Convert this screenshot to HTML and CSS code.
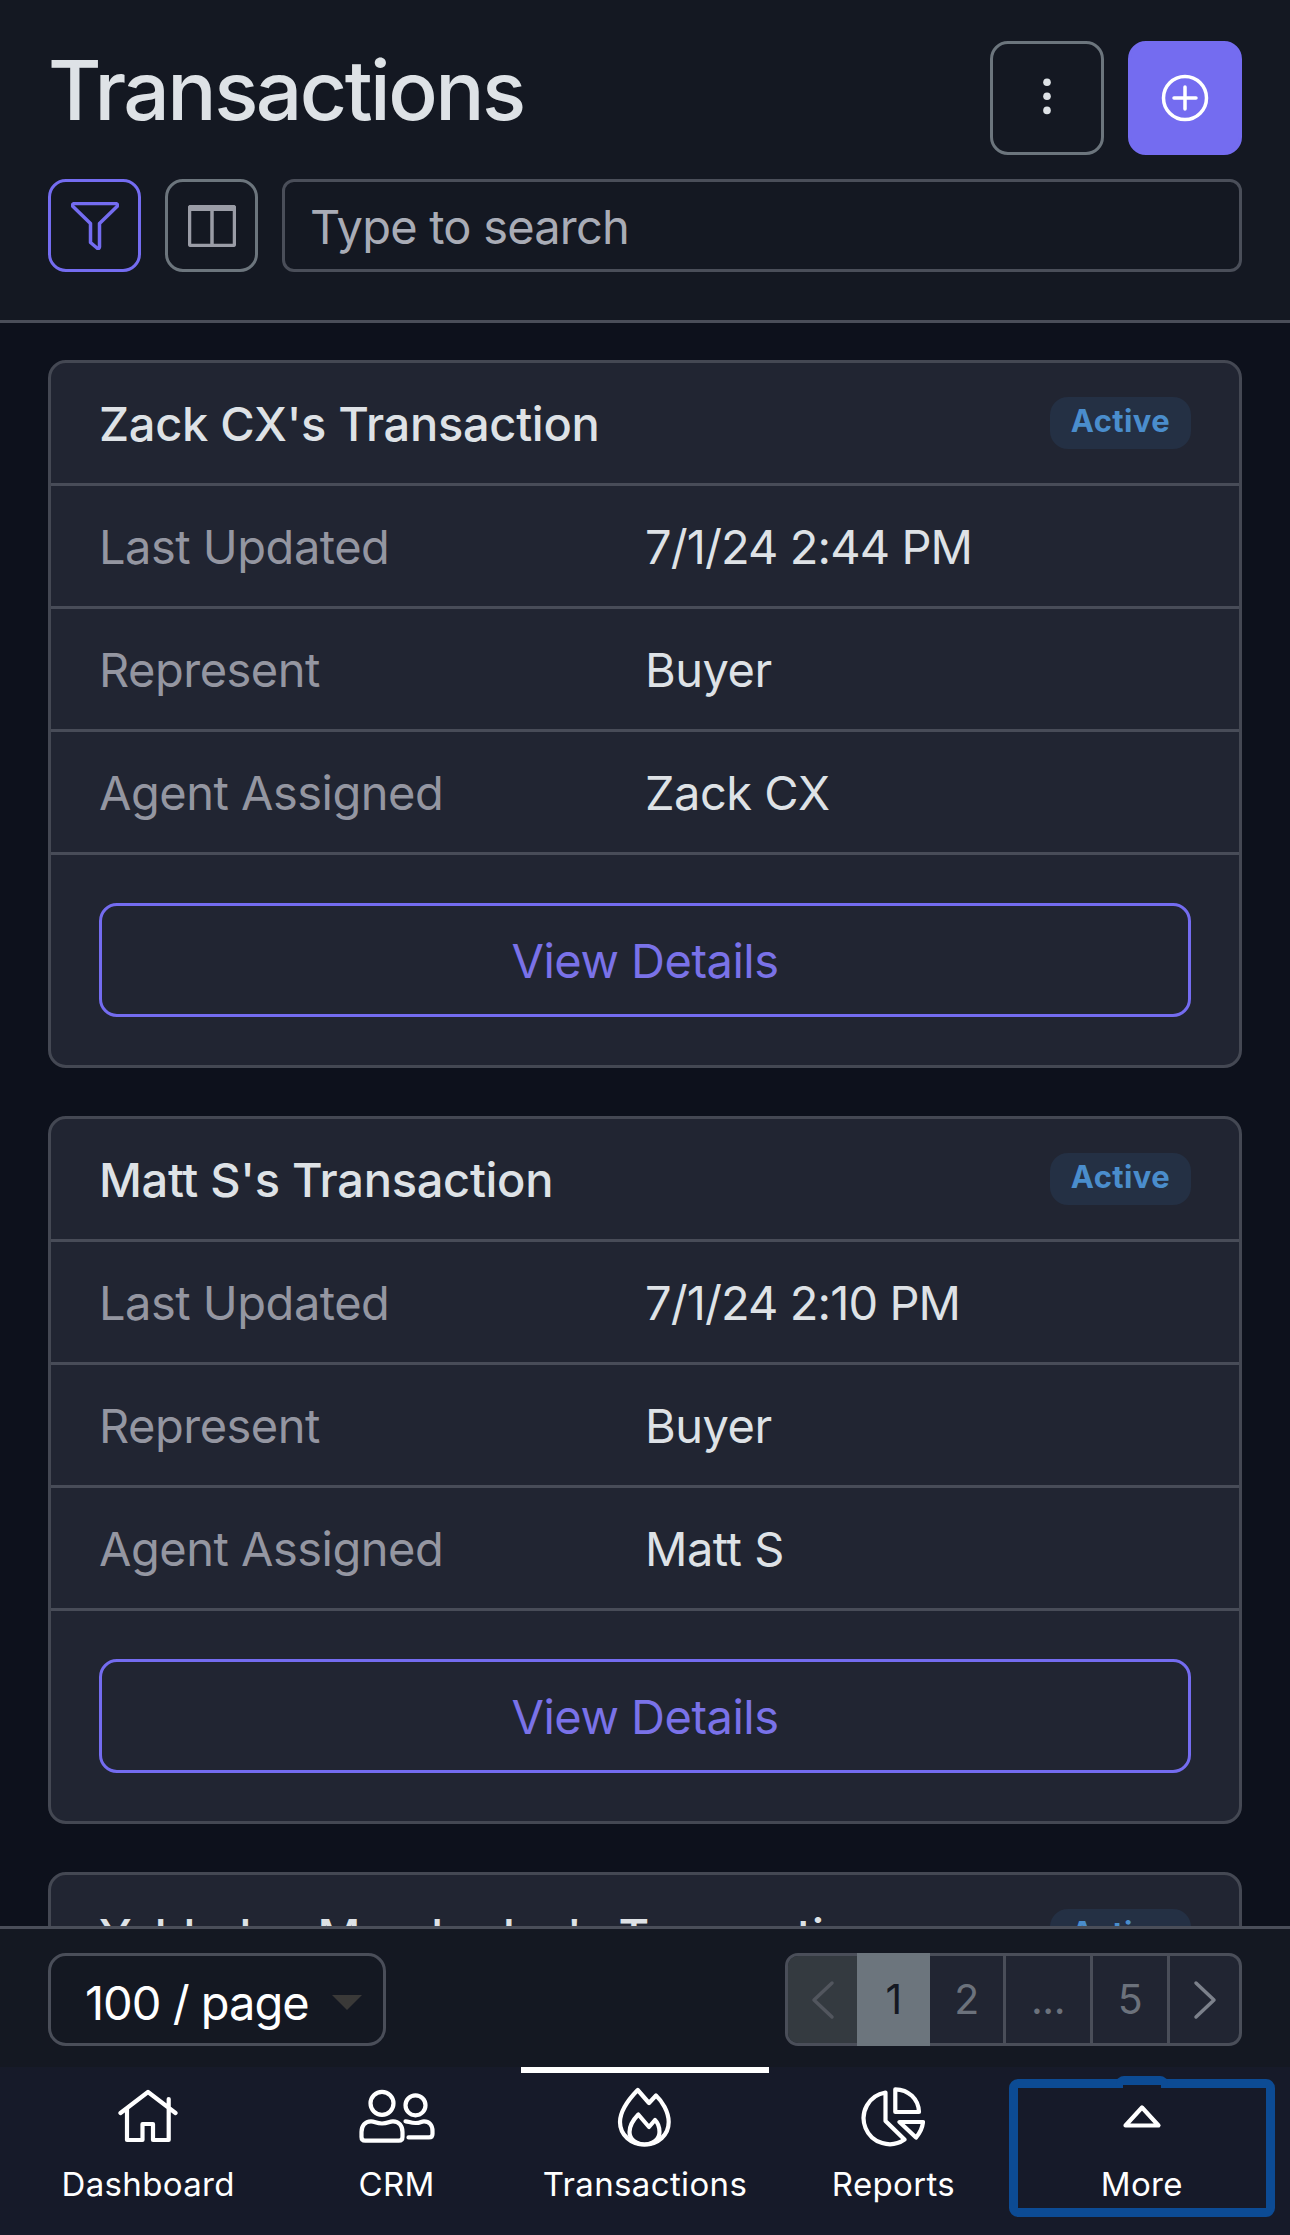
FILE: index.html
```html
<!DOCTYPE html>
<html lang="en">
<head>
    <meta charset="UTF-8">
    <meta name="viewport" content="width=device-width, initial-scale=1.0">
    <title>Transactions</title>
    <link rel="stylesheet" href="styles.css">
</head>
<body>
    <header class="page-header">
        <div class="title-row">
            <h1>Transactions</h1>
            <div class="actions">
                <button class="btn btn-menu" type="button" aria-label="Menu">
                    <svg width="48" height="48" viewBox="0 0 48 48"><circle cx="24" cy="8.3" r="3.8"/><circle cx="24" cy="22.3" r="3.8"/><circle cx="24" cy="36.4" r="3.8"/></svg>
                </button>
                <button class="btn btn-add" type="button" aria-label="Add">
                    <svg class="line" width="48" height="48" viewBox="0 0 48 48"><circle cx="24" cy="24" r="21.5"/><path d="M24 13V35M13 24H35"/></svg>
                </button>
            </div>
        </div>
        <div class="search-row">
            <button class="btn btn-small btn-filter" type="button" aria-label="Filter">
                <svg class="line" width="48" height="48" viewBox="0 0 48 48"><path d="M3.5 1.5H44.5Q47.5 2 46 4.5L28.5 21.5V45Q28 47.5 26 46L19.5 40.500V21.5L2 4.5Q.5 2 3.5 1.5Z"/></svg>
            </button>
            <button class="btn btn-small btn-columns" type="button" aria-label="Columns">
                <svg class="line" width="48" height="42" viewBox="0 0 48 42"><rect x="1.5" y="1.5" width="45" height="39" rx="2"/><path d="M3 3H45" stroke-width="6"/><path d="M24 5V40"/></svg>
            </button>
            <input class="search" type="text" placeholder="Type to search">
        </div>
    </header>

    <main class="list">
        <article class="card">
            <div class="card-head">
                <h2>Zack CX's Transaction</h2>
                <span class="badge">Active</span>
            </div>
            <div class="card-row"><span class="label">Last Updated</span><span class="date">7/1/24 2:44 PM</span></div>
            <div class="card-row"><span class="label">Represent</span><span>Buyer</span></div>
            <div class="card-row"><span class="label">Agent Assigned</span><span>Zack CX</span></div>
            <div class="card-foot"><button class="btn-details" type="button">View Details</button></div>
        </article>
        <article class="card">
            <div class="card-head">
                <h2>Matt S's Transaction</h2>
                <span class="badge">Active</span>
            </div>
            <div class="card-row"><span class="label">Last Updated</span><span class="date">7/1/24 2:10 PM</span></div>
            <div class="card-row"><span class="label">Represent</span><span>Buyer</span></div>
            <div class="card-row"><span class="label">Agent Assigned</span><span>Matt S</span></div>
            <div class="card-foot"><button class="btn-details" type="button">View Details</button></div>
        </article>
        <article class="card">
            <div class="card-head">
                <h2>Yebledan Merchadez's Transaction</h2>
                <span class="badge">Active</span>
            </div>
        </article>
    </main>

    <div class="pager">
        <div class="page-size">100 / page<span class="caret"></span></div>
        <div class="pages">
            <span class="page prev"><svg class="line" width="24" height="40" viewBox="0 0 24 40"><path d="M21 3L3 20L21 37"/></svg></span>
            <span class="page current">1</span>
            <span class="page">2</span>
            <span class="page dots">...</span>
            <span class="page five">5</span>
            <span class="page next"><svg class="line" width="24" height="40" viewBox="0 0 24 40"><path d="M3 3L21 20L3 37"/></svg></span>
        </div>
    </div>

    <nav class="tabs">
        <a class="tab">
            <svg class="line" width="60" height="60" viewBox="0 0 60 60"><path d="M2.5 26L30 5L57.5 26M9 21V53H24.5V37H35V53H50.7V12"/></svg>
            Dashboard
        </a>
        <a class="tab">
            <svg class="line" width="76" height="60" viewBox="0 0 76 60"><circle cx="23" cy="16.3" r="11.5"/><circle cx="56.5" cy="18.3" r="10"/><path d="M12 34.3C16 34.3 17 36.5 23 36.5S30 34.3 34 34.3C40 34.3 43.5 39 43.5 45V50Q43.5 53.7 39.8 53.7H6.2Q2.5 53.7 2.5 50V45C2.5 39 6 34.3 12 34.3Z"/><path d="M46.5 34.3C50 34.3 51 36 56.5 36S62 34.3 65 34.3C70 34.3 73.5 38 73.5 44V47Q73.5 50.4 70 50.4H49.5"/></svg>
            CRM
        </a>
        <a class="tab active">
            <svg class="line" width="60" height="60" viewBox="0 0 60 60"><path d="M22.7 3C14 12 5 23 5 35C5 48 16 57.5 29.5 57.5S53.7 48 53.7 35C53.7 25 47 14 41 8.5L34 16Z"/><path d="M23.3 27.5C18 33 14.5 39 14.5 45C14.5 52 21 57.5 29.5 57.5S44.5 52 44.5 45C44.5 40 43 36 40 33L34 40Z"/></svg>
            Transactions
        </a>
        <a class="tab">
            <svg class="line" width="64" height="60" viewBox="0 0 64 60"><path d="M24.5 5.5A26 26 0 1 0 43.5 52.5L24.5 34Z"/><path d="M34.3 2.3V25H58C57.5 12 47.5 2.5 34.3 2.3Z"/><path d="M38.5 35H62C61.5 41 58.5 46.5 55 50.5Z"/></svg>
            Reports
        </a>
        <a class="tab more">
            <svg class="line" width="60" height="60" viewBox="0 0 60 60"><path d="M30 20.5L46.5 38.5H13.5Z"/></svg>
            More
        </a>
    </nav>
</body>
</html>
```
FILE: styles.css
```css
*, *::before, *::after {
    box-sizing: border-box;
}

body {
    margin: 0;
    height: 100vh;
    display: flex;
    flex-direction: column;
    overflow: hidden;
    background-color: #0d111c;
    color: #dee2e6;
    font-family: Inter, "Liberation Sans", sans-serif;
    font-size: 47px;
    letter-spacing: -0.5px;
}

svg {
    display: block;
    fill: currentColor;
}

.line {
    fill: none;
    stroke: currentColor;
    stroke-width: 3.5;
    stroke-linecap: round;
    stroke-linejoin: round;
}

h1, h2 {
    margin: 0;
    font-weight: 500;
}

button, input {
    font: inherit;
    letter-spacing: inherit;
    padding: 0;
    margin: 0;
}

/* header */
.page-header {
    height: 323px;
    flex: none;
    padding: 41px 48px 0;
    background-color: #141822;
    border-bottom: 3px solid #4a4e59;
}

.title-row {
    display: flex;
    justify-content: space-between;
    height: 114px;
    margin-bottom: 24px;
}

h1 {
    font-size: 82px;
    line-height: 99px;
    letter-spacing: -2.5px;
}

.actions, .search-row {
    display: flex;
    gap: 24px;
}

.btn {
    width: 114px;
    height: 114px;
    display: flex;
    justify-content: center;
    align-items: center;
    background: none;
    border: 3px solid #6c757d;
    border-radius: 18px;
    color: #dee2e6;
}

.btn-add {
    background-color: #746cf0;
    border-color: #746cf0;
    color: #fff;
}

.btn-small {
    width: 93px;
    height: 93px;
    flex: none;
}

.btn-filter {
    border-color: #746cf0;
    color: #746cf0;
}

.btn-columns {
    color: #9a9ca6;
}

.search {
    flex: 1;
    min-width: 0;
    height: 93px;
    padding: 2px 25px 0;
    background: none;
    border: 3px solid #4a4e59;
    border-radius: 12px;
    color: #dee2e6;
    letter-spacing: -0.8px;
}

.search::placeholder {
    color: #a9acb6;
    opacity: 1;
}

/* transaction cards */
.list {
    flex: 1;
    min-height: 0;
    overflow: hidden;
    padding: 37px 48px 0;
}

.card {
    margin-bottom: 48px;
    background-color: #212532;
    border: 3px solid #444853;
    border-radius: 18px;
}

.card-head, .card-row {
    height: 123px;
    padding: 0 48px;
    border-bottom: 3px solid #484c58;
    align-items: center;
}

.card-head {
    display: flex;
    justify-content: space-between;
}

h2 {
    font-size: 47px;
    letter-spacing: -0.3px;
}

.card-row {
    display: grid;
    grid-template-columns: 1fr 1fr;
}

.label {
    color: #9496a1;
}

.date {
    letter-spacing: -0.9px;
}

.badge {
    width: 141px;
    height: 52px;
    line-height: 48px;
    text-align: center;
    border-radius: 18px;
    background-color: #243044;
    color: #4a8dcc;
    font-size: 31px;
    font-weight: 700;
    letter-spacing: 0.4px;
}

.card-foot {
    padding: 48px;
}

.btn-details {
    display: block;
    width: 100%;
    height: 114px;
    background: none;
    border: 3px solid #746cf0;
    border-radius: 18px;
    color: #7a72e8;
}

/* pagination */
.pager {
    flex: none;
    height: 141px;
    padding: 24px 48px 0;
    display: flex;
    justify-content: space-between;
    background-color: #141822;
    border-top: 3px solid #4a4e59;
}

.page-size {
    width: 338px;
    height: 93px;
    padding: 6px 21px 0 34px;
    display: flex;
    align-items: center;
    justify-content: space-between;
    border: 3px solid #4a4e59;
    border-radius: 18px;
    color: #fff;
    letter-spacing: -1px;
}

.caret {
    border: 15px solid transparent;
    border-top-color: #3a3938;
    border-bottom: 0;
}

.pages {
    display: flex;
    width: 457px;
    height: 93px;
    border: 3px solid #4a4e59;
    border-radius: 13px;
    background-color: #212532;
    color: #6c727c;
    font-size: 41px;
    line-height: 85px;
}

.page {
    width: 76px;
    display: flex;
    align-items: center;
    justify-content: center;
    border-right: 3px solid #4a4e59;
}

.prev {
    width: 69px;
    border: 0;
    border-radius: 10px 0 0 10px;
    background-color: #343a40;
    color: #52565e;
}

.current {
    width: 73px;
    margin: -3px 0;
    border: 0;
    background-color: #6c757d;
    color: #141822;
}

.dots {
    width: 87px;
}

.five {
    width: 77px;
}

.next {
    width: 69px;
    border: 0;
    color: #7c818b;
}

/* bottom navigation */
.tabs {
    flex: none;
    height: 168px;
    padding: 0 24px;
    display: flex;
    background-color: #161a29;
    color: #fff;
}

.tab {
    flex: 1;
    position: relative;
    display: flex;
    flex-direction: column;
    align-items: center;
    padding-top: 20px;
    font-size: 33px;
    line-height: 40px;
    letter-spacing: 0.35px;
}

.tab svg {
    margin-bottom: 17px;
    stroke-width: 4.2;
}

.active::before {
    content: "";
    position: absolute;
    top: 0;
    left: 0;
    right: 0;
    height: 6px;
    background-color: #fff;
}

/* focus ring around the last tab and its icon */
.more::before {
    content: "";
    position: absolute;
    top: 12px;
    left: -9px;
    right: -9px;
    height: 138px;
    border: 9px solid #0c4b94;
    border-radius: 9px;
}

.more::after {
    content: "";
    position: absolute;
    top: 9px;
    left: 98px;
    width: 52px;
    height: 12px;
    border: 7px solid #0c4b94;
    border-top-width: 9px;
    border-bottom: 0;
    border-radius: 8px 8px 0 0;
    background-color: #161a29;
}
```
